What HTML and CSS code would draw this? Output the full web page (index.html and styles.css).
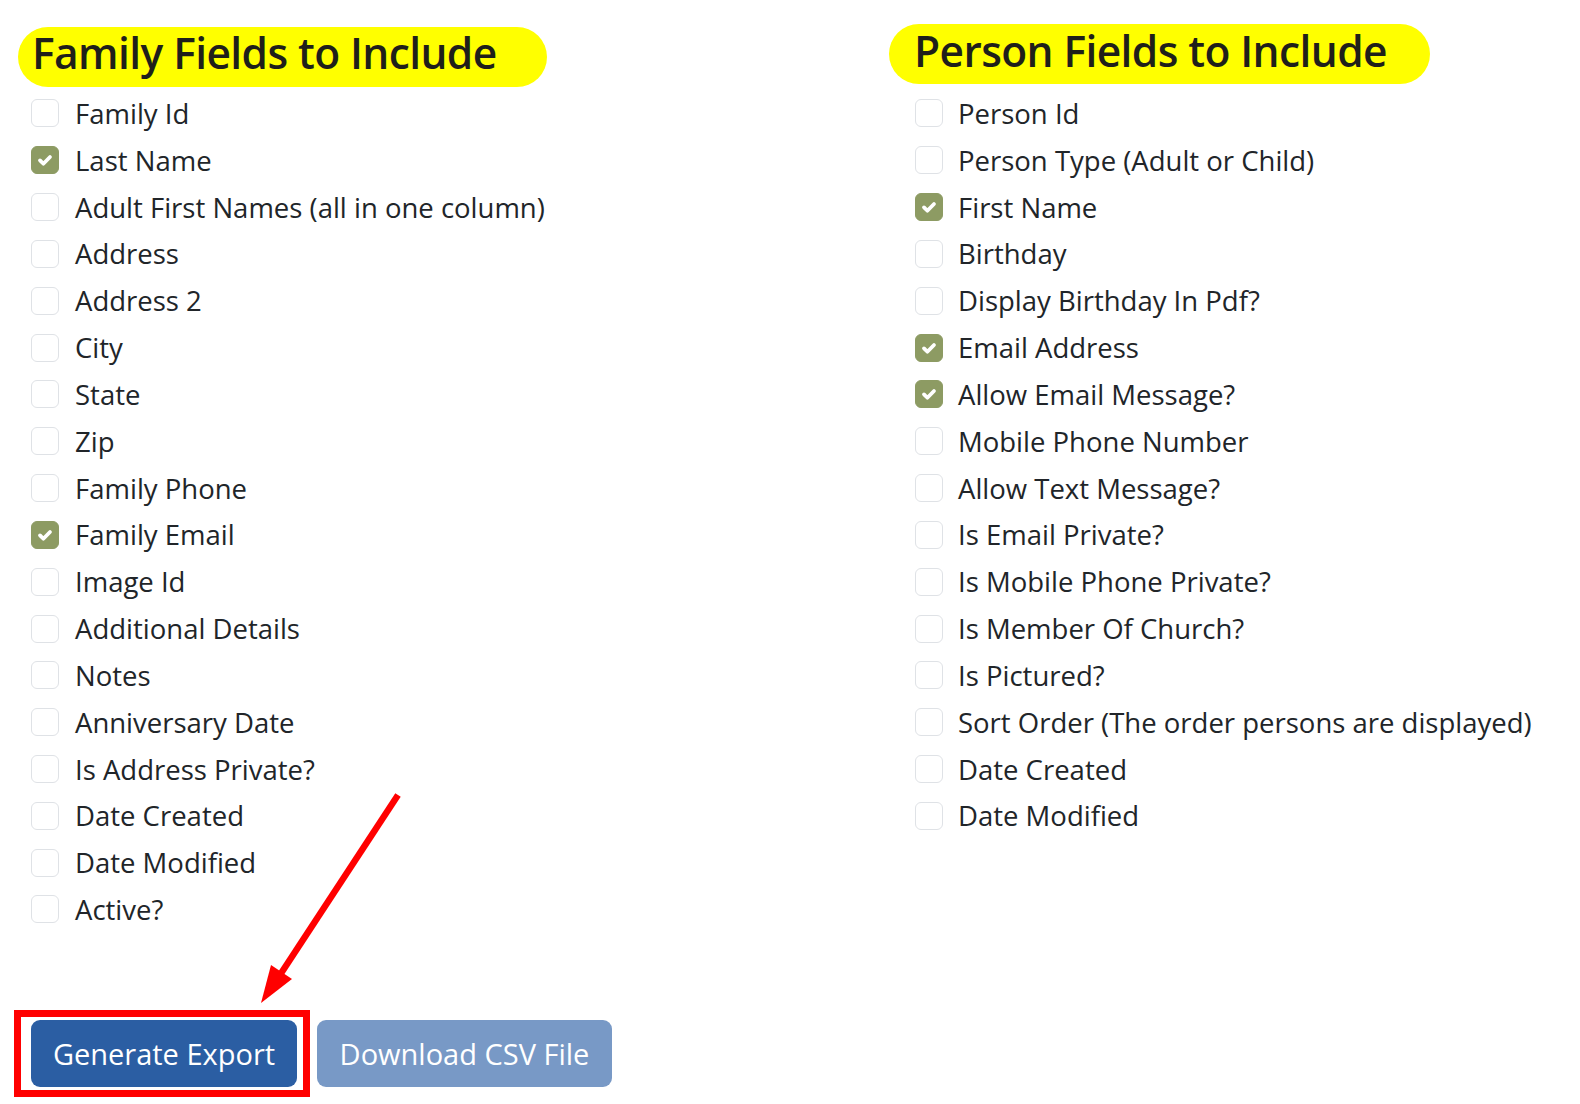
FILE: index.html
```html
<!DOCTYPE html>
<html lang="en">
<head>
<meta charset="utf-8">
<title>Export Fields</title>
<link rel="stylesheet" href="styles.css">
</head>
<body>
<div class="page">
  <div class="columns">
    <section class="col col-family">
      <h2 class="pill pill-family">Family Fields to Include</h2>
      <ul class="fields">
        <li><span class="cb"></span><span class="lbl">Family Id</span></li>
        <li><span class="cb on"><svg viewBox="0 0 16 16"><path d="M4 8.3l2.7 2.7L12 5.6"/></svg></span><span class="lbl">Last Name</span></li>
        <li><span class="cb"></span><span class="lbl">Adult First Names (all in one column)</span></li>
        <li><span class="cb"></span><span class="lbl">Address</span></li>
        <li><span class="cb"></span><span class="lbl">Address 2</span></li>
        <li><span class="cb"></span><span class="lbl">City</span></li>
        <li><span class="cb"></span><span class="lbl">State</span></li>
        <li><span class="cb"></span><span class="lbl">Zip</span></li>
        <li><span class="cb"></span><span class="lbl">Family Phone</span></li>
        <li><span class="cb on"><svg viewBox="0 0 16 16"><path d="M4 8.3l2.7 2.7L12 5.6"/></svg></span><span class="lbl">Family Email</span></li>
        <li><span class="cb"></span><span class="lbl">Image Id</span></li>
        <li><span class="cb"></span><span class="lbl">Additional Details</span></li>
        <li><span class="cb"></span><span class="lbl">Notes</span></li>
        <li><span class="cb"></span><span class="lbl">Anniversary Date</span></li>
        <li><span class="cb"></span><span class="lbl">Is Address Private?</span></li>
        <li><span class="cb"></span><span class="lbl">Date Created</span></li>
        <li><span class="cb"></span><span class="lbl">Date Modified</span></li>
        <li><span class="cb"></span><span class="lbl">Active?</span></li>
      </ul>
    </section>
    <section class="col col-person">
      <h2 class="pill pill-person">Person Fields to Include</h2>
      <ul class="fields">
        <li><span class="cb"></span><span class="lbl">Person Id</span></li>
        <li><span class="cb"></span><span class="lbl">Person Type (Adult or Child)</span></li>
        <li><span class="cb on"><svg viewBox="0 0 16 16"><path d="M4 8.3l2.7 2.7L12 5.6"/></svg></span><span class="lbl">First Name</span></li>
        <li><span class="cb"></span><span class="lbl">Birthday</span></li>
        <li><span class="cb"></span><span class="lbl">Display Birthday In Pdf?</span></li>
        <li><span class="cb on"><svg viewBox="0 0 16 16"><path d="M4 8.3l2.7 2.7L12 5.6"/></svg></span><span class="lbl">Email Address</span></li>
        <li><span class="cb on"><svg viewBox="0 0 16 16"><path d="M4 8.3l2.7 2.7L12 5.6"/></svg></span><span class="lbl">Allow Email Message?</span></li>
        <li><span class="cb"></span><span class="lbl">Mobile Phone Number</span></li>
        <li><span class="cb"></span><span class="lbl">Allow Text Message?</span></li>
        <li><span class="cb"></span><span class="lbl">Is Email Private?</span></li>
        <li><span class="cb"></span><span class="lbl">Is Mobile Phone Private?</span></li>
        <li><span class="cb"></span><span class="lbl">Is Member Of Church?</span></li>
        <li><span class="cb"></span><span class="lbl">Is Pictured?</span></li>
        <li><span class="cb"></span><span class="lbl">Sort Order (The order persons are displayed)</span></li>
        <li><span class="cb"></span><span class="lbl">Date Created</span></li>
        <li><span class="cb"></span><span class="lbl">Date Modified</span></li>
      </ul>
    </section>
  </div>
  <div class="actions">
    <button class="btn btn-primary" type="button">Generate Export</button>
    <button class="btn btn-disabled" type="button">Download CSV File</button>
  </div>
  <div class="annot-box"></div>
  <svg class="annot-arrow" width="160" height="230" viewBox="0 0 160 230">
    <line x1="139" y1="10" x2="17" y2="196" stroke="#ff0000" stroke-width="6.5"/>
    <polygon points="2,218 12,180 33,194" fill="#ff0000"/>
  </svg>
</div>
</body>
</html>
```
FILE: styles.css
```css
* { box-sizing: border-box; }
html, body { margin: 0; padding: 0; background: #ffffff; }
body {
  font-family: "Open Sans", "Noto Sans", sans-serif;
  color: #212529;
  width: 1580px;
  height: 1104px;
  overflow: hidden;
}
.page {
  position: relative;
  width: 1580px;
  height: 1104px;
}
.columns {
  display: grid;
  grid-template-columns: 871px 1fr;
  padding-left: 18px;
}
.col { display: flex; flex-direction: column; }
.pill {
  margin: 0;
  height: 60px;
  border-radius: 30px;
  background: #ffff00;
  color: #1f1f1a;
  font-family: "Open Sans", sans-serif;
  font-weight: 600;
  font-size: 42.5px;
  line-height: 51px;
  letter-spacing: -0.6px;
  white-space: nowrap;
}
.pill-family {
  margin-top: 27px;
  width: 529px;
  padding-left: 14px;
}
.pill-person {
  margin-top: 24px;
  width: 541px;
  padding-left: 25px;
  line-height: 53px;
}
.fields {
  list-style: none;
  margin: 0;
  padding: 0;
}
.col-family .fields { margin-top: 3px; padding-left: 13px; }
.col-person .fields { margin-top: 6px; padding-left: 26px; }
.fields li {
  display: flex;
  align-items: center;
  height: 46.83px;
  font-size: 27.5px;
  white-space: nowrap;
}
.cb {
  flex: 0 0 auto;
  width: 28px;
  height: 28px;
  border: 1px solid #dfe2e6;
  border-radius: 6px;
  background: #fff;
  display: flex;
  align-items: center;
  justify-content: center;
}
.cb.on {
  background: #8d9b63;
  border-color: #8d9b63;
}
.cb svg {
  width: 20px;
  height: 20px;
  fill: none;
  stroke: #ffffff;
  stroke-width: 3;
  stroke-linecap: round;
  stroke-linejoin: round;
}
.lbl { margin-left: 16px; }
.col-person .lbl { margin-left: 15px; }
.actions {
  position: absolute;
  left: 31px;
  top: 1020px;
  display: flex;
  gap: 20px;
}
.btn {
  height: 67px;
  border: none;
  border-radius: 9px;
  color: #ffffff;
  font-family: "Open Sans", sans-serif;
  font-size: 29px;
  padding: 0;
  line-height: 67px;
  text-align: center;
}
.btn-primary { background: #2b5ea3; width: 266px; }
.btn-disabled { background: #7899c6; width: 295px; }
.annot-box {
  position: absolute;
  left: 14px;
  top: 1010px;
  width: 296px;
  height: 87px;
  border: 7px solid #ff0000;
}
.annot-arrow {
  position: absolute;
  left: 259px;
  top: 785px;
}
```
